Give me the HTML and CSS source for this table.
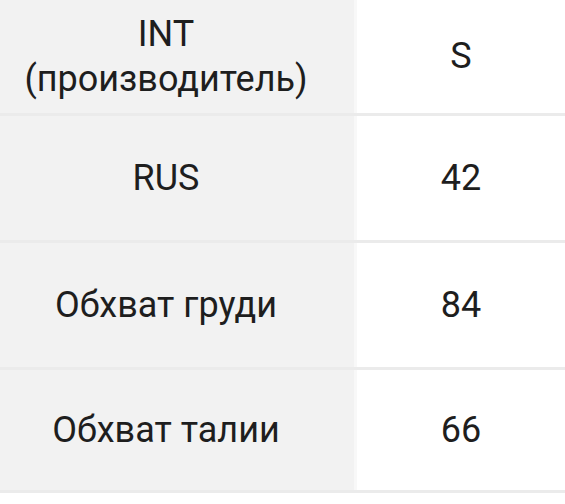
FILE: index.html
```html
<!DOCTYPE html>
<html lang="ru">
<head>
<meta charset="utf-8">
<link rel="stylesheet" href="styles.css">
</head>
<body>
<div class="table">
  <div class="row row-head">
    <div class="cell cell-label">INT<br>(производитель)</div>
    <div class="cell cell-value">S</div>
  </div>
  <div class="row">
    <div class="cell cell-label">RUS</div>
    <div class="cell cell-value">42</div>
  </div>
  <div class="row">
    <div class="cell cell-label">Обхват груди</div>
    <div class="cell cell-value">84</div>
  </div>
  <div class="row row-last">
    <div class="cell cell-label">Обхват талии</div>
    <div class="cell cell-value">66</div>
  </div>
</div>
</body>
</html>
```

FILE: styles.css
```css
html, body {
  margin: 0;
  padding: 0;
  background: #ffffff;
}

body {
  font-family: Roboto, "Noto Sans", "Liberation Sans", sans-serif;
  color: #1e1e1e;
  width: 565px;
}

.table {
  display: flex;
  flex-direction: column;
}

.row {
  display: flex;
  height: 124px;
  border-bottom: 3px solid #ebebeb;
}

.row-head {
  height: 113px;
}

.row-last {
  height: 120px;
}

.cell {
  display: flex;
  align-items: center;
  justify-content: center;
  text-align: center;
  font-size: 36px;
  line-height: 45px;
}

.cell-label {
  width: 357px;
  flex: none;
  box-sizing: border-box;
  padding-right: 22px;
  background: #f2f2f2;
  border-right: 3px solid #f8f8f8;
}

.cell-value {
  flex: 1;
  background: #ffffff;
}
```
